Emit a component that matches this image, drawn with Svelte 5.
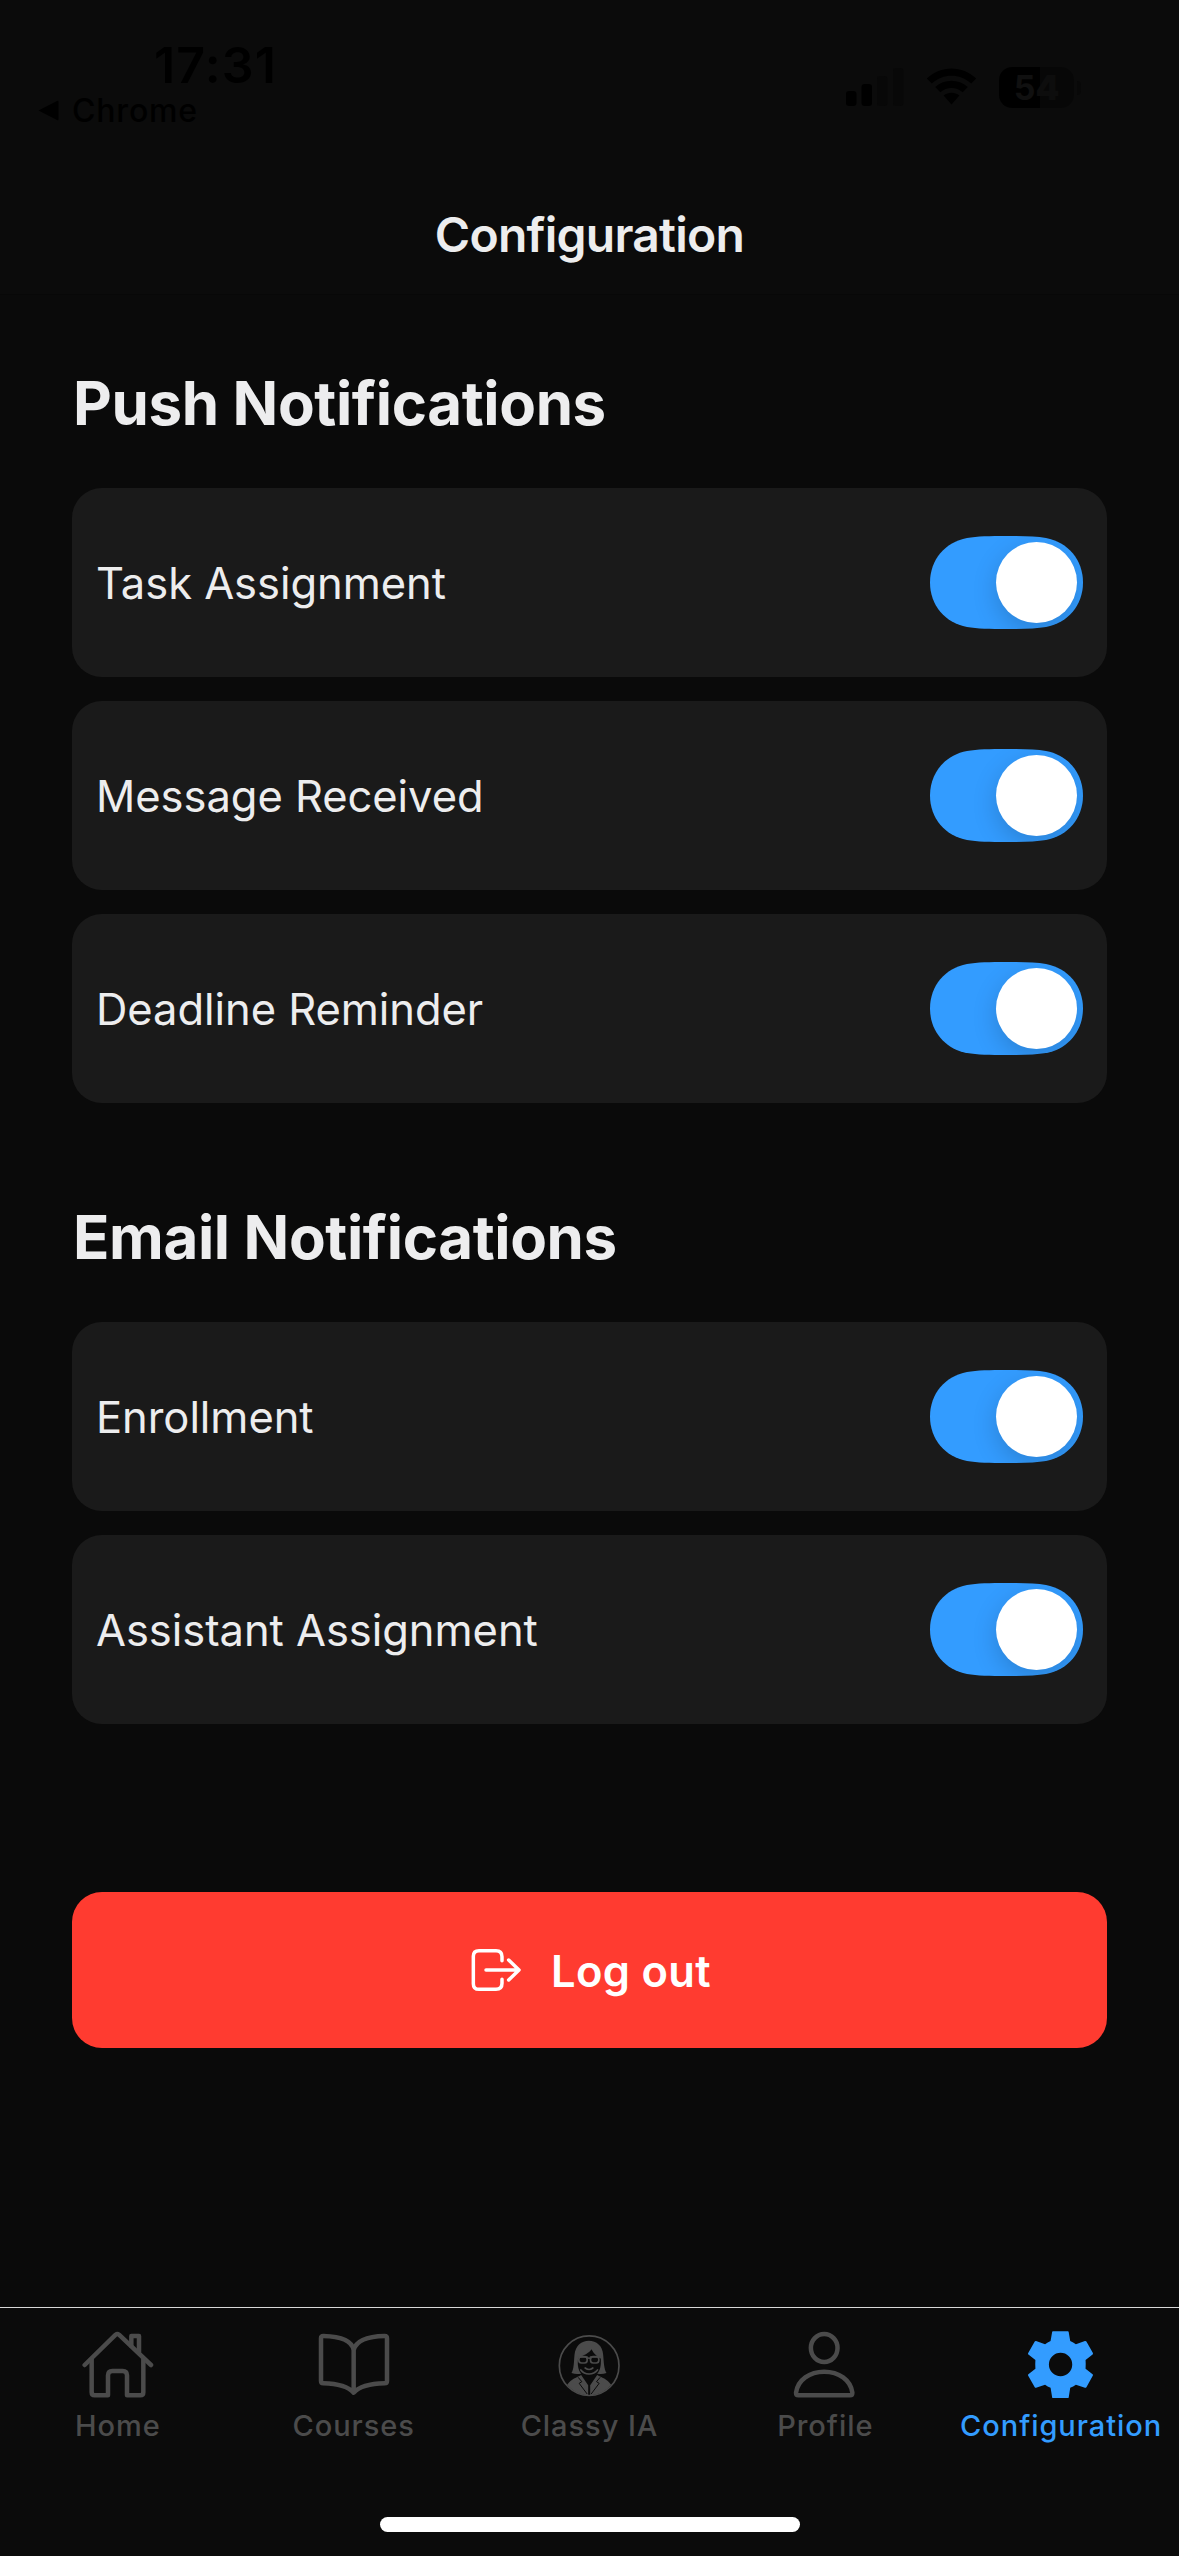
<script>
  let sections = $state([
    {
      title: 'Push Notifications',
      items: [
        { label: 'Task Assignment', on: true },
        { label: 'Message Received', on: true },
        { label: 'Deadline Reminder', on: true },
      ],
    },
    {
      title: 'Email Notifications',
      items: [
        { label: 'Enrollment', on: true },
        { label: 'Assistant Assignment', on: true },
      ],
    },
  ]);

  const tabs = [
    { id: 'home', label: 'Home', box: '126 117 216 216' },
    { id: 'courses', label: 'Courses', box: '833 117 216 216' },
    { id: 'classy', label: 'Classy IA', box: '160.5 117 216 216' },
    { id: 'profile', label: 'Profile', box: '867.9 117 216 216' },
    { id: 'config', label: 'Configuration', box: '375.3 117 216 216', active: true },
  ];
</script>

<div class="screen">
  <header>
    <div class="status">
      <div class="left">
        <div class="time">17:31</div>
        <div class="back">
          <svg width="21" height="21" viewBox="0 0 21 21"><path d="M0.5 10.5 L19 1 Q20.5 0.3 20.5 2 V19 Q20.5 20.7 19 20 Z" /></svg>
          <span>Chrome</span>
        </div>
      </div>
      <div class="right">
        <svg class="signal" width="58" height="38" viewBox="0 0 58 38">
          <rect x="0" y="23" width="10.5" height="15" rx="3" />
          <rect x="15.5" y="16" width="10.5" height="22" rx="3" />
          <rect class="dim" x="31" y="8" width="10.5" height="30" rx="3" />
          <rect class="dim" x="47" y="0" width="10.5" height="38" rx="3" />
        </svg>
        <svg class="wifi" width="51" height="38" viewBox="0 0 51 38">
          <path d="M0.8 10.5 C14.5 -3 36.5 -3 50.2 10.5 L45.2 15.6 C34 5 17 5 5.8 15.6 Z" />
          <path d="M9.2 19 C18.5 10.5 32.5 10.5 41.8 19 L36.7 24.2 C30.2 18.5 20.8 18.5 14.3 24.2 Z" />
          <path d="M17.6 27.6 C22.3 23.9 28.7 23.9 33.4 27.6 L25.5 36.5 Z" />
        </svg>
        <div class="battery"><div class="level"><span>5<b>4</b></span></div><i></i></div>
      </div>
    </div>
    <h1>Configuration</h1>
  </header>

  <main>
    {#each sections as section}
      <section>
        <h2>{section.title}</h2>
        <div class="cards">
          {#each section.items as item}
            <div class="card">
              <span>{item.label}</span>
              <button class="switch" class:off={!item.on} role="switch" aria-checked={item.on} aria-label={item.label} onclick={() => (item.on = !item.on)}>
                <i></i>
              </button>
            </div>
          {/each}
        </div>
      </section>
    {/each}

    <button class="logout">
      <svg width="52" height="44" viewBox="90 204 156 132">
        <path d="M186 242 V230 Q186 212 168 212 H117 Q100 212 100 229 V311 Q100 328 117 328 H168 Q186 328 186 310 V298 M138 270 H236 M206 240 L237 270 L206 300" />
      </svg>
      <span>Log out</span>
    </button>
  </main>

  <nav>
    {#each tabs as tab}
      <a href="#{tab.id}" class:active={tab.active}>
        <svg width="72" height="72" viewBox={tab.box}>
          {#if tab.id === 'home'}
            <path class="line" d="M134 225 L227 134 Q232 130 237 134 L333 225" />
            <path class="line" d="M155 208 V307 Q155 316 164 316 H204 V256 Q204 243 217 243 H248 Q261 243 261 256 V316 H301 Q310 316 310 307 V208" />
            <path class="line" d="M274 168 V138 H297 V187" />
          {:else if tab.id === 'courses'}
            <path class="line" d="M940 180 C934 150 898 139 849 138 Q842 138 842 145 V273 Q842 280 849 280 C890 281 922 288 940 308 C958 288 990 281 1033 280 Q1040 280 1040 273 V145 Q1040 138 1033 138 C984 139 948 150 940 180 Z M940 180 V306" />
          {:else if tab.id === 'classy'}
            <circle class="ring" cx="269" cy="227" r="89.5" />
            <path class="fill" d="M216 249 C224 235 223 213 225 194 C228 166 246 152 268 152 C291 152 309 167 311 194 C313 214 313 235 321 249 C311 253 302 253 293 251 C302 241 305 228 304 206 C295 200 284 194 276 178 C268 190 253 197 236 203 C233 224 236 240 245 251 C235 253 226 253 216 249 Z" />
            <path class="thin" d="M244 240 C256 256 281 256 294 240 M257 234 Q269 243 280 234 M232 201 H263 M273 201 H305 M263 206 Q268 202 273 206" />
            <rect class="lens" x="238" y="200" width="25" height="19" rx="8" />
            <rect class="lens" x="273" y="200" width="25" height="19" rx="8" />
            <path class="fill" d="M203 284 C216 266 231 263 245 255 L266 286 V316 C240 314 219 303 203 284 Z" />
            <path class="fill" d="M335 284 C322 266 307 263 293 255 L272 286 V316 C298 314 319 303 335 284 Z" />
            <path class="collar" d="M236 262 L247 275 L239 280 L263 312 M302 262 L291 275 L299 280 L275 312" />
          {:else if tab.id === 'profile'}
            <ellipse class="line" cx="973.5" cy="174" rx="40" ry="42" />
            <path class="line" d="M896 316 Q889 316 889 308 C894 270 930 245 973.5 245 C1017 245 1053 270 1058 308 Q1058 316 1051 316 Z" />
          {:else}
            <path class="gear" fill-rule="evenodd" d="M459 124 H504 Q506 124 506.3 126 L511 153 Q520 157 528 163 L555 153 Q558 152 559.5 154.5 L579 189 Q580 192 578 193.5 L557 210 Q558 223 557 236 L578 252.5 Q580 254 579 256.5 L559.5 291.5 Q558 294 555 293.5 L528 284 Q520 290 511 293 L506.5 321.5 Q506 324 504 324 H459 Q457 324 456.7 321.5 L452 293 Q443 290 435.5 284 L408.5 293.5 Q406 294 404.5 291.5 L384.5 256.5 Q383.5 254 385.5 252.5 L406.5 236 Q405.5 223 406.5 210 L385.5 193.5 Q383.5 192 384.5 189.5 L404.5 154.5 Q406 152 408.5 153 L435.5 163 Q443 157 452 153 L456.7 126 Q457 124 459 124 Z M482 188.5 A35 35 0 1 0 482 258.5 A35 35 0 1 0 482 188.5 Z" />
          {/if}
        </svg>
        <span>{tab.label}</span>
      </a>
    {/each}
  </nav>
  <div class="indicator"><i></i></div>
</div>

<style>
  :global(body) {
    background: #0a0a0a;
  }
  .screen {
    width: 1179px;
    height: 2556px;
    display: flex;
    flex-direction: column;
    background: #0a0a0a;
    color: #ededee;
    font-family: Inter, sans-serif;
    overflow: hidden;
  }
  header {
    box-sizing: border-box;
    height: 295px;
    background: #0b0b0b;
    border-bottom: 1px solid #080808;
  }
  .status {
    height: 177px;
    display: flex;
    justify-content: space-between;
    color: #000;
  }
  .left {
    padding: 35px 0 0 38px;
  }
  .time {
    padding-left: 116px;
    font-size: 50px;
    line-height: 60px;
    font-weight: 600;
    letter-spacing: 1.2px;
  }
  .back {
    display: flex;
    align-items: center;
    gap: 13px;
    height: 31px;
    font-size: 32px;
    font-weight: 500;
    letter-spacing: 0.8px;
  }
  .right {
    display: flex;
    gap: 22px;
    padding: 67px 98px 0 0;
  }
  .signal,
  .wifi {
    margin-top: 1px;
  }
  .dim {
    fill: #080808;
  }
  .battery {
    display: flex;
    align-items: center;
    gap: 3px;
    height: 41px;
  }
  .level {
    width: 75px;
    height: 41px;
    border-radius: 13px;
    background: linear-gradient(90deg, #000 41px, #070707 41px);
    color: #101010;
    font-size: 34px;
    line-height: 41px;
    font-weight: 700;
    text-align: center;
  }
  .level b {
    color: #0d0d0d;
  }
  .battery i {
    width: 4px;
    height: 14px;
    border-radius: 0 4px 4px 0;
    background: #080808;
  }
  h1 {
    margin: 0;
    height: 115px;
    line-height: 115px;
    font-size: 48px;
    font-weight: 600;
    letter-spacing: -0.75px;
    text-align: center;
  }
  main {
    flex: 1;
    padding: 72px 72px 0;
  }
  section + section {
    margin-top: 98px;
  }
  h2 {
    margin: 0 0 49px;
    padding-left: 1px;
    font-size: 60px;
    line-height: 72px;
    font-weight: 700;
    letter-spacing: -0.37px;
  }
  .cards {
    display: flex;
    flex-direction: column;
    gap: 24px;
  }
  .card {
    box-sizing: border-box;
    height: 189px;
    padding: 0 24px;
    display: flex;
    align-items: center;
    justify-content: space-between;
    border-radius: 30px;
    background: #1a1a1a;
    font-size: 43.5px;
    letter-spacing: -0.05px;
  }
  .switch {
    width: 153px;
    height: 93px;
    padding: 6px;
    border: 0;
    display: flex;
    justify-content: flex-end;
    background: #339cff;
    clip-path: path('M76.5 0 C93 0 106 0.3 116 2 C138 6 153 24 153 46.5 C153 69 138 87 116 91 C106 92.7 93 93 76.5 93 C60 93 47 92.7 37 91 C15 87 0 69 0 46.5 C0 24 15 6 37 2 C47 0.3 60 0 76.5 0 Z');
  }
  .switch.off {
    justify-content: flex-start;
    background: #39393d;
  }
  .switch i {
    width: 81px;
    height: 81px;
    border-radius: 50%;
    background: #fff;
    box-shadow: 0 8px 24px rgba(0, 0, 0, 0.17);
  }
  .logout {
    width: 100%;
    height: 156px;
    margin-top: 168px;
    padding: 0 0 0 2px;
    border: 0;
    border-radius: 30px;
    display: flex;
    align-items: center;
    justify-content: center;
    gap: 29px;
    background: #ff3b30;
    color: #fff;
    font-family: inherit;
    font-size: 43.5px;
    font-weight: 600;
    letter-spacing: 0.3px;
  }
  .logout span {
    padding-top: 2px;
  }
  .logout path {
    fill: none;
    stroke: #fff;
    stroke-width: 10.5;
    stroke-linecap: round;
    stroke-linejoin: round;
  }
  nav {
    height: 209px;
    display: grid;
    grid-template-columns: repeat(5, 1fr);
    border-top: 1px solid #d8d8d8;
    background: #0b0b0b;
  }
  nav a {
    display: flex;
    flex-direction: column;
    align-items: center;
    gap: 7px;
    padding-top: 21px;
    color: #4b4b4b;
    text-decoration: none;
    font-size: 29px;
    line-height: 36px;
    font-weight: 500;
    letter-spacing: 0.95px;
    white-space: nowrap;
  }
  nav a.active {
    color: #339cff;
  }
  .line,
  .ring,
  .thin,
  .lens {
    fill: none;
    stroke: currentColor;
    stroke-width: 13.5;
    stroke-linecap: round;
    stroke-linejoin: round;
  }
  .ring,
  .thin,
  .lens {
    stroke-width: 5;
  }
  .fill,
  .gear {
    fill: currentColor;
  }
  .collar {
    fill: none;
    stroke: #0b0b0b;
    stroke-width: 3;
  }
  .indicator {
    height: 39px;
    display: flex;
    justify-content: center;
    background: #0b0b0b;
  }
  .indicator i {
    width: 420px;
    height: 15px;
    border-radius: 8px;
    background: #fff;
  }
</style>
